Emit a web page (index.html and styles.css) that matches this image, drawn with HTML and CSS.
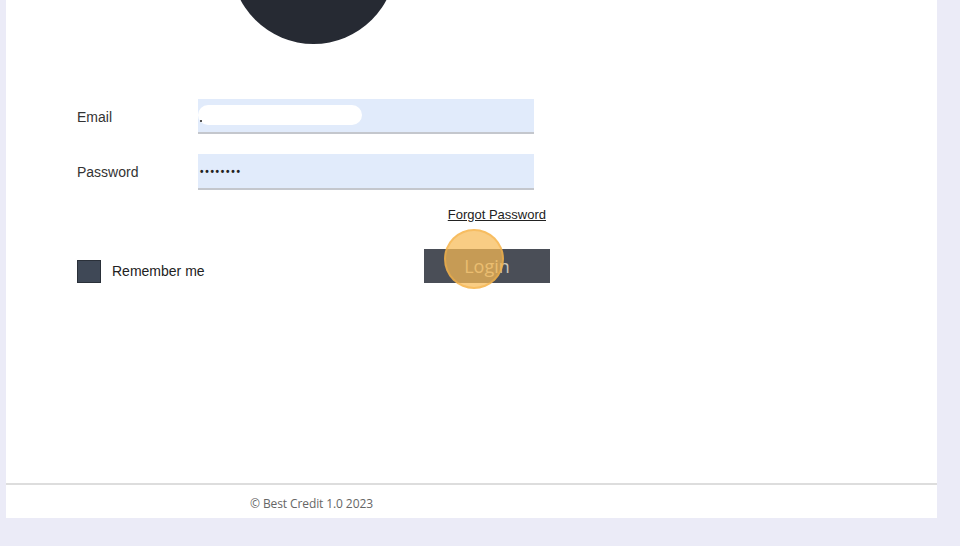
FILE: index.html
```html
<!DOCTYPE html>
<html>
<head>
<meta charset="utf-8">
<link rel="stylesheet" href="styles.css">
</head>
<body>
<div class="panel">
  <main class="main">
    <div class="avatar"></div>
    <form class="form">
      <div class="field">
        <label class="label">Email</label>
        <div class="input">
          <span class="autofill"></span>
          <span class="caret"></span>
        </div>
      </div>
      <div class="field">
        <label class="label">Password</label>
        <div class="input"><span class="dots">••••••••</span></div>
      </div>
      <div class="forgot-row"><a class="forgot" href="#">Forgot Password</a></div>
      <div class="actions">
        <div class="remember"><span class="check"></span><span class="remember-text">Remember me</span></div>
        <div class="btn-wrap">
          <button type="button" class="login">Login</button>
          <span class="click"></span>
        </div>
      </div>
    </form>
  </main>
  <footer class="footer">© Best Credit 1.0 2023</footer>
</div>
</body>
</html>
```
FILE: styles.css
```css
* { box-sizing: border-box; }
html, body { margin: 0; padding: 0; }
body {
  background: #ebebf7;
  height: 546px;
  overflow: hidden;
  font-family: "Liberation Sans", Arial, sans-serif;
}
.panel {
  margin-left: 6px;
  width: 931px;
  height: 518px;
  background: #ffffff;
  display: flex;
  flex-direction: column;
}
.main {
  height: 483px;
  display: flex;
  flex-direction: column;
}
.avatar {
  width: 165px;
  height: 165px;
  border-radius: 50%;
  background: #262a33;
  margin-top: -121px;
  margin-left: 225px;
  flex: none;
}
.form {
  margin-top: 55px;
  margin-left: 71px;
  width: 469px;
  display: flex;
  flex-direction: column;
}
.field {
  display: flex;
  align-items: center;
  height: 35px;
  margin-bottom: 20px;
}
.field:nth-child(2) { margin-bottom: 18px; height: 36px; }
.label {
  width: 121px;
  font-size: 14px;
  color: #333;
}
.input {
  position: relative;
  width: 336px;
  height: 100%;
  background: #e1ebfb;
  border-bottom: 2px solid #c4c7cd;
  display: flex;
  align-items: center;
}
.autofill {
  position: absolute;
  left: 0;
  top: 6px;
  width: 164px;
  height: 20px;
  background: #ffffff;
  border-radius: 10px;
}
.caret {
  position: absolute;
  left: 2px;
  top: 21px;
  width: 2px;
  height: 2px;
  background: #555;
}
.dots {
  padding-left: 2px;
  font-size: 10px;
  letter-spacing: 1.7px;
  color: #222;
  font-weight: bold;
}
.forgot-row {
  display: flex;
  justify-content: flex-end;
  height: 14px;
  line-height: 14px;
}
.forgot {
  font-size: 13px;
  color: #222;
  text-decoration: underline;
}
.actions {
  margin-top: 27px;
  display: flex;
  justify-content: space-between;
  align-items: center;
  margin-right: -4px;
}
.remember {
  display: flex;
  align-items: center;
  margin-top: 10px;
}
.check {
  width: 24px;
  height: 23px;
  background: #3f4856;
  border: 1px solid #2a3039;
}
.remember-text {
  margin-left: 11px;
  font-size: 14px;
  color: #222;
}
.btn-wrap { position: relative; }
.login {
  display: block;
  width: 126px;
  height: 34px;
  border: 0;
  background: #4a4e57;
  color: #cbc5b6;
  font-family: "Open Sans", sans-serif;
  font-size: 18px;
  padding: 0;
}
.click {
  position: absolute;
  left: 20px;
  top: -20px;
  width: 60px;
  height: 60px;
  border-radius: 50%;
  background: rgba(246, 186, 85, 0.72);
  border: 2px solid rgba(246, 176, 70, 0.55);
}
.footer {
  border-top: 2px solid #dddddd;
  height: 35px;
  padding-left: 244px;
  padding-top: 3px;
  display: flex;
  align-items: center;
  font-family: "Open Sans", sans-serif;
  font-size: 12px;
  letter-spacing: -0.1px;
  color: #666;
}
```
